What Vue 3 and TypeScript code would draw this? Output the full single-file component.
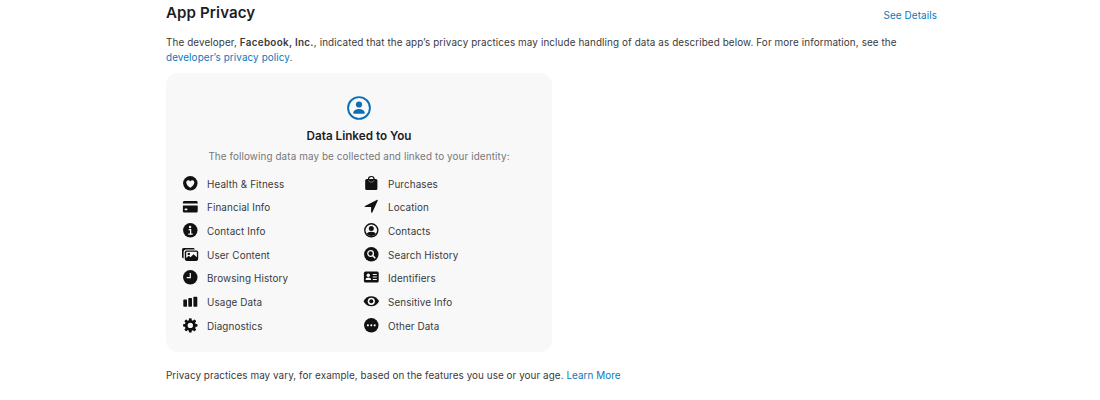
<script setup lang="ts">
type IconName =
  | 'heart' | 'card' | 'info' | 'photos' | 'clock' | 'bars' | 'gear'
  | 'bag' | 'arrow' | 'person' | 'search' | 'id' | 'eye' | 'dots'

interface Category {
  icon: IconName
  label: string
}

const columns: Category[][] = [
  [
    { icon: 'heart', label: 'Health & Fitness' },
    { icon: 'card', label: 'Financial Info' },
    { icon: 'info', label: 'Contact Info' },
    { icon: 'photos', label: 'User Content' },
    { icon: 'clock', label: 'Browsing History' },
    { icon: 'bars', label: 'Usage Data' },
    { icon: 'gear', label: 'Diagnostics' },
  ],
  [
    { icon: 'bag', label: 'Purchases' },
    { icon: 'arrow', label: 'Location' },
    { icon: 'person', label: 'Contacts' },
    { icon: 'search', label: 'Search History' },
    { icon: 'id', label: 'Identifiers' },
    { icon: 'eye', label: 'Sensitive Info' },
    { icon: 'dots', label: 'Other Data' },
  ],
]

const teeth: number[] = [0, 45, 90, 135, 180, 225, 270, 315]
</script>

<template>
  <main class="page">
    <section class="privacy">
      <header class="head">
        <h2 class="title">App Privacy</h2>
        <a class="link details">See Details</a>
      </header>
      <p class="intro">
        The developer, <strong>Facebook, Inc.</strong>, indicated that the app’s privacy practices may include handling of data as described below. For more information, see the<br />
        <a class="link policy">developer’s privacy policy</a>.
      </p>
      <div class="card">
        <svg class="badge" viewBox="0 0 24 24">
          <circle cx="12" cy="12" r="10.9" fill="none" stroke="currentColor" stroke-width="1.9" />
          <circle cx="12" cy="8.5" r="3.1" fill="currentColor" />
          <path d="M6.2 16.8C6.600 14.200 9 13 12 13s5.400 1.200 5.800 3.800c0 .6-.3.9-.8.9H7c-.5 0-.8-.3-.8-.9z" fill="currentColor" />
        </svg>
        <h3 class="card-title">Data Linked to You</h3>
        <p class="card-note">The following data may be collected and linked to your identity:</p>
        <div class="lists">
          <ul v-for="(column, index) in columns" :key="index" class="list">
            <li v-for="item in column" :key="item.label" class="item">
              <svg class="icon" viewBox="0 0 16 16" fill="currentColor">
                <template v-if="item.icon === 'heart'">
                  <circle cx="8.3" cy="7.3" r="7.2" />
                  <path class="cut" d="M8.300 11.700C5.800 10 4.300 8.400 4.300 6.500c0-1.300.9-2.200 2.100-2.200.8 0 1.500.4 1.900 1.100.4-.7 1.100-1.100 1.900-1.100 1.200 0 2.100.9 2.100 2.200 0 1.900-1.500 3.500-4 5.200z" />
                </template>
                <template v-else-if="item.icon === 'card'">
                  <path d="M.9 4.400V3.500c0-1 .6-1.600 1.600-1.600h11.600c1 0 1.600.6 1.600 1.600v.9z" />
                  <path d="M.9 6.500h14.800v5.500c0 1-.6 1.600-1.600 1.600H2.500c-1 0-1.600-.6-1.600-1.600z" />
                  <rect class="cut" x="2.600" y="9.600" width="2.800" height="1.600" rx=".4" />
                </template>
                <template v-else-if="item.icon === 'info'">
                  <circle cx="8.300" cy="7.300" r="7.200" />
                  <circle class="cut" cx="8.100" cy="4" r="1.200" />
                  <path class="line" d="M6.600 6.700h2v4.300M6.300 11.200h4.400" stroke-width="1.300" />
                </template>
                <template v-else-if="item.icon === 'photos'">
                  <path d="M1.600 11.300C.6 11.200 0 10.600 0 9.500V2.900C0 1.700.6 1 1.800 1h9.200c1.100 0 1.700.6 1.800 1.500H4.400c-1.800 0-2.800 1-2.800 2.800z" />
                  <rect x="2.800" y="3.500" width="13.400" height="10.400" rx="1.800" />
                  <path class="cut" d="M4.200 11.100l2.500-2.300 1.800 1.500 3-3 3.400 3V5.800c0-.6-.4-1-1-1H5.200c-.6 0-1 .4-1 1z" />
                  <circle cx="6.800" cy="6.900" r="1.200" />
                </template>
                <template v-else-if="item.icon === 'clock'">
                  <circle cx="8.300" cy="7.300" r="7.200" />
                  <path class="line" d="M8.300 3v4.700H4.700" stroke-width="1.200" />
                </template>
                <template v-else-if="item.icon === 'bars'">
                  <rect x="1.300" y="5.400" width="3.700" height="7.300" rx=".7" />
                  <rect x="6.300" y="4" width="3.700" height="8.700" rx=".7" />
                  <rect x="11.400" y="2.700" width="3.900" height="10" rx=".7" />
                </template>
                <template v-else-if="item.icon === 'gear'">
                  <rect v-for="angle in teeth" :key="angle" x="6.900" y=".2" width="2.800" height="4" rx=".7" :transform="`rotate(${angle} 8.300 7.400)`" />
                  <circle cx="8.300" cy="7.400" r="4.100" fill="none" stroke="currentColor" stroke-width="2.800" />
                </template>
                <template v-else-if="item.icon === 'bag'">
                  <path d="M5.500 4V3.200C5.500 1.500 6.600.5 8.300.5s2.800 1 2.800 2.700V4" fill="none" stroke="currentColor" stroke-width="1.200" />
                  <rect x="2.200" y="3" width="12.200" height="11" rx="1.500" />
                  <path class="line" d="M5.600 4.200c.2 1.300 1.200 2 2.700 2s2.500-.7 2.700-2" stroke-width=".4" />
                </template>
                <path v-else-if="item.icon === 'arrow'" d="M2 7L13.800.9c.7-.3 1.200.2.900.9L9.300 13.400c-.3.700-1.200.5-1.200-.3V7.900H2.300c-.9 0-1-.6-.3-.9z" />
                <template v-else-if="item.icon === 'person'">
                  <circle cx="8.300" cy="7.300" r="6.500" fill="none" stroke="currentColor" stroke-width="1.400" />
                  <circle cx="8.300" cy="5.500" r="2.500" />
                  <path d="M3.700 11.100C4.300 9.500 6 8.800 8.300 8.800s4 .7 4.600 2.300C11.800 12.400 10.100 13.100 8.300 13.100s-3.500-.7-4.600-2z" />
                </template>
                <template v-else-if="item.icon === 'search'">
                  <circle cx="8.300" cy="7.300" r="7.200" />
                  <circle class="line" cx="7.600" cy="6.500" r="2.800" stroke-width="1.300" />
                  <path class="line" d="M9.700 8.600l2.600 2.600" stroke-width="1.500" />
                </template>
                <template v-else-if="item.icon === 'id'">
                  <rect x=".9" y="1.600" width="14.800" height="11" rx="1.600" />
                  <circle class="cut" cx="5.300" cy="5.300" r="1.700" />
                  <path class="cut" d="M2.500 10c.2-1.600 1.200-2.400 2.800-2.400s2.600.8 2.800 2.400z" />
                  <path class="line" d="M9.800 4.500h4M9.800 7h4M9.800 9.500h4" stroke-width="1" />
                </template>
                <template v-else-if="item.icon === 'eye'">
                  <path d="M.5 7.300C2 4.200 5 2.300 8.300 2.300s6.300 1.900 7.800 5c-1.500 3.100-4.500 5-7.800 5s-6.300-1.900-7.800-5z" />
                  <circle class="cut" cx="8.300" cy="7.300" r="3.600" />
                  <circle cx="8.300" cy="7.300" r="2" />
                </template>
                <template v-else>
                  <circle cx="8.300" cy="7.300" r="7.200" />
                  <circle class="cut" cx="4.900" cy="7.300" r="1.100" />
                  <circle class="cut" cx="8.300" cy="7.300" r="1.100" />
                  <circle class="cut" cx="11.700" cy="7.300" r="1.100" />
                </template>
              </svg>
              <span class="label">{{ item.label }}</span>
            </li>
          </ul>
        </div>
      </div>
      <p class="footnote">Privacy practices may vary, for example, based on the features you use or your age. <a class="link">Learn More</a></p>
    </section>
  </main>
</template>

<style>
body {
  background: #fff;
}
</style>

<style scoped>
.page {
  height: 400px;
  overflow: hidden;
  font-family: Inter, "Liberation Sans", sans-serif;
  font-size: 9.9px;
  letter-spacing: 0.1px;
  color: #3a3a3c;
}
.privacy {
  width: 771px;
  margin-left: 166px;
}
h2,
h3,
p,
ul {
  margin: 0;
  padding: 0;
}
.head {
  display: flex;
  justify-content: space-between;
  height: 35px;
}
.title {
  padding-top: 3px;
  font-size: 15.1px;
  line-height: 20px;
  font-weight: 600;
  letter-spacing: 0.1px;
  color: #1d1d1f;
}
.details {
  padding-top: 7px;
  line-height: 16px;
}
.link {
  color: #0b78bd;
}
.intro {
  line-height: 14.5px;
  white-space: nowrap;
}
.intro strong {
  font-weight: 600;
  letter-spacing: 0.3px;
}
.card {
  display: flex;
  flex-direction: column;
  align-items: center;
  box-sizing: border-box;
  width: 386px;
  height: 279px;
  margin-top: 9px;
  padding-top: 23px;
  border-radius: 12px;
  background: #f8f8f8;
}
.badge {
  width: 24px;
  height: 24px;
  color: #0b6fb8;
}
.card-title {
  margin-top: 8px;
  font-size: 11.7px;
  line-height: 16px;
  font-weight: 600;
  letter-spacing: 0;
  color: #1d1d1f;
}
.card-note {
  margin-top: 4px;
  line-height: 16px;
  color: #77777a;
}
.lists {
  display: grid;
  grid-template-columns: 181px 181px;
  align-self: stretch;
  margin-top: 8px;
  padding-left: 16px;
}
.list {
  list-style: none;
}
.item {
  display: flex;
  align-items: center;
  height: 23.67px;
}
.icon {
  width: 16px;
  height: 16px;
  margin-right: 9px;
  overflow: visible;
  color: #111;
}
.cut {
  fill: #f8f8f8;
}
.line {
  fill: none;
  stroke: #f8f8f8;
}
.footnote {
  margin-top: 15px;
  line-height: 16px;
  letter-spacing: 0.06px;
  white-space: nowrap;
}
</style>
